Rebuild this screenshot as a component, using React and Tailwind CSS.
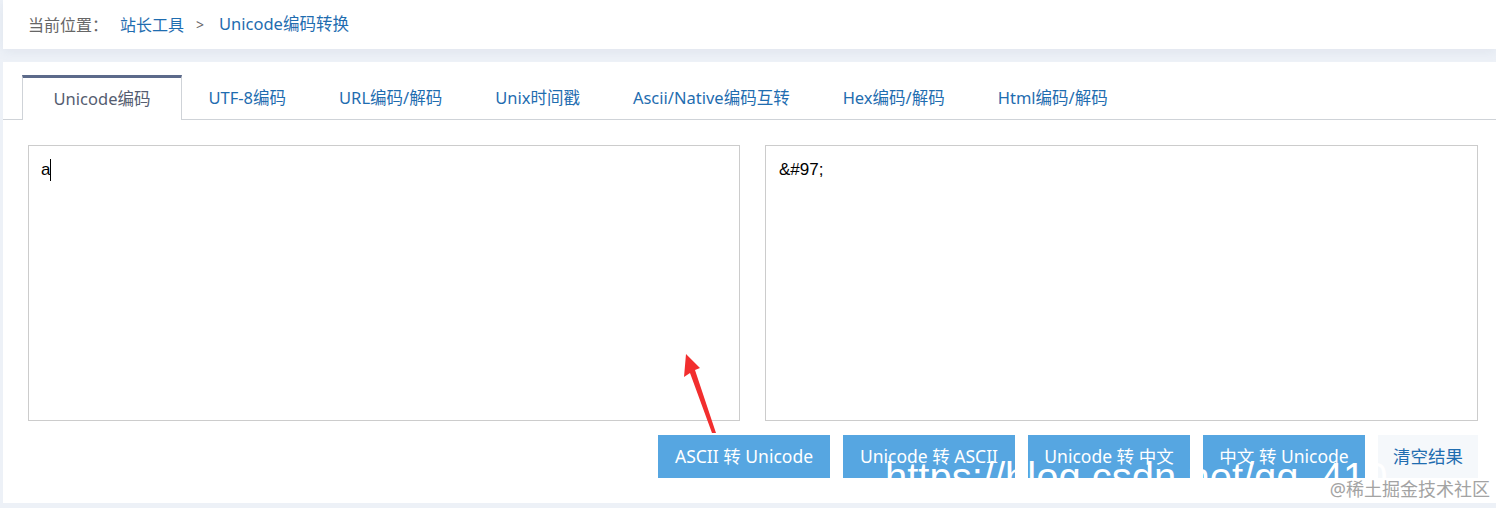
const tabs = ['UTF-8编码', 'URL编码/解码', 'Unix时间戳', 'Ascii/Native编码互转', 'Hex编码/解码', 'Html编码/解码'];

const buttons = [
  { label: 'ASCII 转 Unicode', w: 'w-[172px]' },
  { label: 'Unicode 转 ASCII', w: 'w-[172px]' },
  { label: 'Unicode 转 中文', w: 'w-[162px]' },
  { label: '中文 转 Unicode', w: 'w-[162px]' },
];

const font = { fontFamily: '"Noto Sans", "Noto Sans CJK SC", sans-serif' };

const App = () => {
  return (
    <div className="relative w-[1496px] h-[508px] overflow-hidden bg-[#edf1f7] pl-[3px]" style={font}>
      {/* breadcrumb */}
      <div className="h-[49px] bg-white flex items-center pl-[25px] text-[16px] shadow-[0_3px_10px_rgba(120,140,170,0.10)]">
        <span className="text-[#666]">当前位置：</span>
        <span className="ml-[12px] text-[#1f6db0]">站长工具</span>
        <span className="ml-[12px] text-[#666] text-[14px]">&gt;</span>
        <span className="ml-[15px] text-[#1f6db0] text-[16.5px]">Unicode编码转换</span>
      </div>

      {/* main card */}
      <div className="mt-[13px] h-[441px] bg-white pt-[13px]">
        <div className="flex h-[45px] border-b border-[#cfd3d8] pl-[19px]">
          <div className="h-[45px] -mb-px w-[160px] bg-white border-t-[3px] border-t-[#5c6a8a] border-x border-x-[#cfd3d8] flex items-center justify-center text-[16.5px] text-[#555d70]">
            Unicode编码
          </div>
          {tabs.map((t) => (
            <div key={t} className="h-[44px] flex items-center px-[26.5px] text-[16.5px] text-[#1f6db0] pt-[2px]">
              {t}
            </div>
          ))}
        </div>

        <div className="flex gap-[25px] pl-[25px] pr-[18px] mt-[25px]">
          <div className="w-[712px] h-[276px] border border-[#cccccc] pl-[12px] pt-[12px] text-[17px] text-black flex items-start" style={{ fontFamily: '"Liberation Sans", sans-serif' }}>
            <span className="leading-[24px]">a</span>
            <span className="mt-[1px] w-px h-[22px] bg-black" />
          </div>
          <div className="flex-1 h-[276px] border border-[#cccccc] pl-[13px] pt-[12px] text-[17px] leading-[24px] text-black" style={{ fontFamily: '"Liberation Sans", sans-serif' }}>
            &amp;#97;
          </div>
        </div>

        <div className="flex justify-end gap-[13px] pr-[18px] mt-[14px]">
          {buttons.map((b) => (
            <button key={b.label} className={`${b.w} h-[43px] bg-[#56a6e1] text-white text-[17.5px] flex items-center justify-center`}>
              {b.label}
            </button>
          ))}
          <button className="w-[100px] h-[43px] bg-[#f5f8fb] text-[#1f6db0] text-[17.5px] flex items-center justify-center">
            清空结果
          </button>
        </div>
      </div>

      {/* red annotation arrow */}
      <svg className="absolute left-0 top-0 pointer-events-none" width="1496" height="508">
        <path d="M686 354 L700 368 L695 370 L716 433 L712 433 L690 373 L684 377 Z" fill="#f22e2e" />
      </svg>

      {/* watermarks */}
      <div className="absolute left-[885px] top-[457px] text-[40px] leading-[40px] text-white whitespace-nowrap pointer-events-none" style={{ fontFamily: '"Liberation Sans", sans-serif' }}>
        https://blog.csdn.net/qq_410
      </div>
      <div className="absolute right-[6px] top-[478px] text-[18px] leading-[22px] text-[#a3a3a3] whitespace-nowrap pointer-events-none">
        @稀土掘金技术社区
      </div>
    </div>
  );
};

export default App;
